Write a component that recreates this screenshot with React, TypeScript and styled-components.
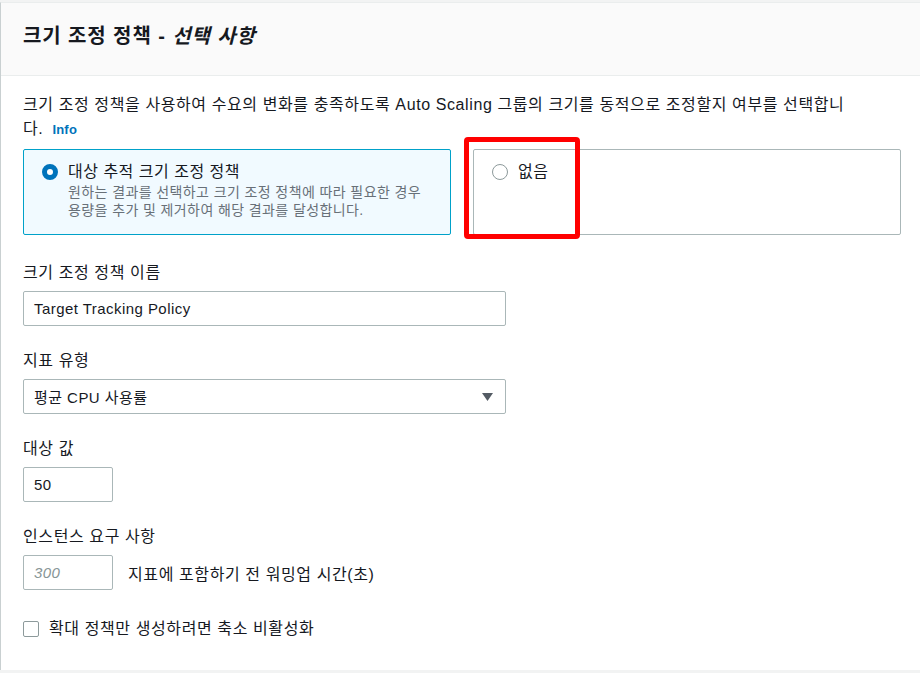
import styled, { createGlobalStyle } from "styled-components";

const GlobalStyle = createGlobalStyle`
  html, body {
    margin: 0;
    padding: 0;
    background: #f2f3f3;
    overflow: hidden;
  }
  body {
    font-family: "Liberation Sans", "Noto Sans CJK KR", sans-serif;
    color: #16191f;
    letter-spacing: 0.6px;
  }
`;

export default function App() {
  return (
    <>
      <GlobalStyle />
      <Panel>
        <Header>
          <Title>
            크기 조정 정책 - <em>선택 사항</em>
          </Title>
        </Header>

        <Body>
          <Description>
            크기 조정 정책을 사용하여 수요의 변화를 충족하도록 Auto Scaling 그룹의 크기를 동적으로 조정할지 여부를 선택합니다.{" "}
            <InfoLink>Info</InfoLink>
          </Description>

          <Tiles>
            <Tile selected>
              <Radio checked />
              <TileText>
                <TileTitle>대상 추적 크기 조정 정책</TileTitle>
                <TileDesc>
                  원하는 결과를 선택하고 크기 조정 정책에 따라 필요한 경우 용량을 추가 및 제거하여 해당 결과를 달성합니다.
                </TileDesc>
              </TileText>
            </Tile>
            <Tile>
              <Radio />
              <TileText>
                <TileTitle>없음</TileTitle>
              </TileText>
              <Highlight />
            </Tile>
          </Tiles>

          <Field first>
            <Label>크기 조정 정책 이름</Label>
            <Input>Target Tracking Policy</Input>
          </Field>

          <Field>
            <Label>지표 유형</Label>
            <Input>
              평균 CPU 사용률
              <Caret viewBox="0 0 11 8">
                <polygon points="0,0 11,0 5.5,8" fill="#545b64" />
              </Caret>
            </Input>
          </Field>

          <Field>
            <Label>대상 값</Label>
            <Input small>50</Input>
          </Field>

          <Field>
            <Label>인스턴스 요구 사항</Label>
            <InlineRow>
              <Input small placeholder>300</Input>
              <InlineText>지표에 포함하기 전 워밍업 시간(초)</InlineText>
            </InlineRow>
          </Field>

          <CheckRow>
            <CheckBox />
            <span>확대 정책만 생성하려면 축소 비활성화</span>
          </CheckRow>
        </Body>
      </Panel>
    </>
  );
}

const Panel = styled.section`
  margin: 2px -3px 0 0;
  background: #fff;
  border-top: 1px solid #eaeded;
  border-left: 1px solid #c9d0d1;
  box-shadow: 0 1px 0 0 #8a9a9b, 0 2px 2px 0 rgba(0, 28, 36, 0.15);
`;

const Header = styled.header`
  background: #fafafa;
  padding: 16px 22px 22px;
  border-bottom: 1px solid #eaeded;
`;

const Title = styled.h2`
  margin: 0;
  font-size: 20px;
  line-height: 34px;
  font-weight: 700;
  letter-spacing: 0.9px;
  em {
    font-style: italic;
  }
`;

const Body = styled.div`
  padding: 17px 22px 30px;
`;

const Description = styled.p`
  margin: 0;
  max-width: 830px;
  font-size: 16px;
  line-height: 24px;
`;

const InfoLink = styled.a`
  margin-left: 4px;
  font-size: 13px;
  font-weight: 700;
  letter-spacing: 0.2px;
  color: #0073bb;
  cursor: pointer;
`;

const Tiles = styled.div`
  display: grid;
  grid-template-columns: 1fr 1fr;
  gap: 22px;
  margin-top: 7px;
`;

const Tile = styled.div<{ selected?: boolean }>`
  position: relative;
  display: flex;
  align-items: flex-start;
  gap: 10px;
  padding: 11px 18px 15px;
  border: 1px solid ${(p) => (p.selected ? "#00a1c9" : "#aab7b8")};
  border-radius: 2px;
  background: ${(p) => (p.selected ? "#f1faff" : "#fff")};
`;

const Radio = styled.span<{ checked?: boolean }>`
  flex: none;
  box-sizing: border-box;
  width: 16px;
  height: 16px;
  margin-top: 3px;
  border-radius: 50%;
  background: #fff;
  border: ${(p) => (p.checked ? "5px solid #0073bb" : "1.5px solid #8d9a9b")};
`;

const TileText = styled.div`
  display: flex;
  flex-direction: column;
`;

const TileTitle = styled.div`
  font-size: 16px;
  line-height: 22px;
  letter-spacing: 0.5px;
`;

const TileDesc = styled.div`
  font-size: 14px;
  line-height: 18px;
  letter-spacing: 0.4px;
  color: #687078;
`;

const Highlight = styled.div`
  position: absolute;
  left: -10px;
  top: -13px;
  width: 116px;
  height: 102px;
  box-sizing: border-box;
  border: 5px solid #ff0000;
  border-radius: 4px;
  pointer-events: none;
`;

const Field = styled.div<{ first?: boolean }>`
  margin-top: ${(p) => (p.first ? "27px" : "24px")};
`;

const Label = styled.div`
  font-size: 16px;
  line-height: 22px;
  margin-bottom: 7px;
`;

const Input = styled.div<{ small?: boolean; placeholder?: boolean }>`
  box-sizing: border-box;
  display: flex;
  align-items: center;
  justify-content: space-between;
  width: ${(p) => (p.small ? "90px" : "483px")};
  height: 35px;
  padding: 0 12px 0 10px;
  border: 1px solid #aab7b8;
  border-radius: 2px;
  background: #fff;
  font-size: 15px;
  letter-spacing: 0.45px;
  color: ${(p) => (p.placeholder ? "#879596" : "#16191f")};
  font-style: ${(p) => (p.placeholder ? "italic" : "normal")};
`;

const Caret = styled.svg`
  width: 11px;
  height: 8px;
`;

const InlineRow = styled.div`
  display: flex;
  align-items: center;
  gap: 15px;
`;

const InlineText = styled.span`
  font-size: 16px;
`;

const CheckRow = styled.label`
  display: flex;
  align-items: center;
  gap: 10px;
  margin-top: 28px;
  font-size: 16px;
  line-height: 22px;
`;

const CheckBox = styled.span`
  box-sizing: border-box;
  width: 16px;
  height: 16px;
  border: 1.5px solid #8d9a9b;
  border-radius: 2px;
  background: #fff;
`;
